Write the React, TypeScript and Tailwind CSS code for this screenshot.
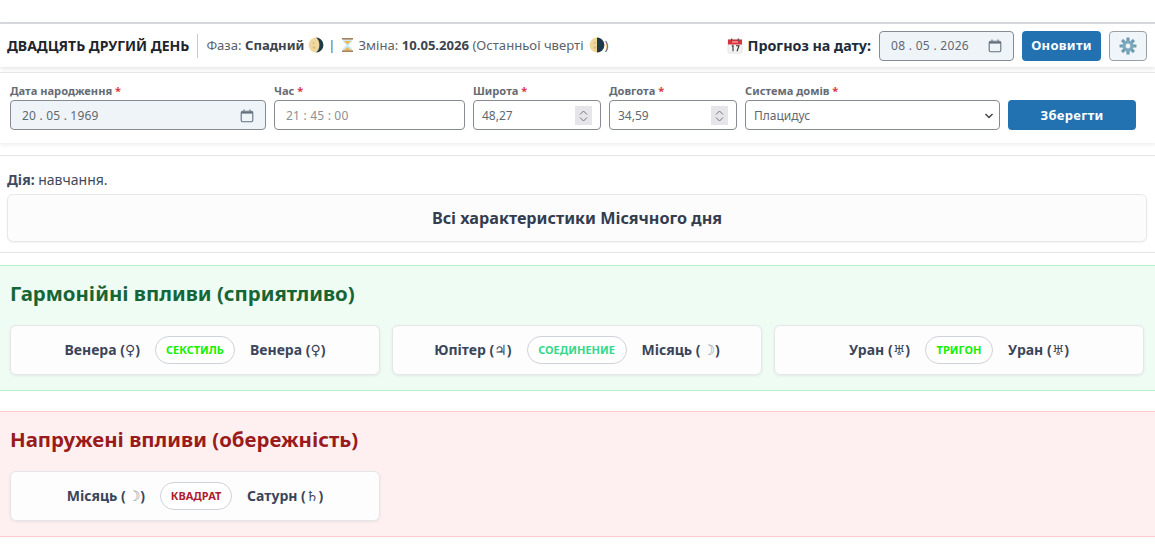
const FONT = "font-['Noto_Sans','Open_Sans','DejaVu_Sans',sans-serif]";

function CalIcon() {
  return (
    <svg width="14" height="14" viewBox="0 0 14 14" fill="none" stroke="#66707c" strokeWidth="1.100" className="shrink-0">
      <rect x="1.200" y="2.200" width="11.600" height="10.600" rx="1.500" />
      <path d="M1.200 3.700h11.600" strokeWidth="1.800" />
      <path d="M4 .6v2M10 .6v2" />
    </svg>
  );
}

function Spinner() {
  return (
    <span className="flex h-[19px] w-[17px] shrink-0 flex-col items-center justify-center gap-[2px] bg-[#e5e5ea]">
      <svg width="9" height="5" viewBox="0 0 9 5" fill="none" stroke="#777" strokeWidth="1"><path d="M1 4.500 4.500 1 8 4.500" /></svg>
      <svg width="9" height="5" viewBox="0 0 9 5" fill="none" stroke="#777" strokeWidth="1"><path d="M1 .5 4.500 4 8 .5" /></svg>
    </span>
  );
}

function Moon({ dark }: { dark: number }) {
  const cover = dark === 1 ? "M8 .6a7.400 7.400 0 0 1 0 14.800c2.300-1.800 3.400-4.400 3.400-7.400S10.300 2.400 8 .6z" : "M8 .6a7.400 7.400 0 0 1 0 14.800z";
  return (
    <svg width="16" height="16" viewBox="0 0 16 16" className="inline-block shrink-0 align-[-3px]">
      <circle cx="8" cy="8" r="7.400" fill="#f0d79c" />
      <circle cx="5.500" cy="6" r="1.100" fill="#dcbd7c" />
      <circle cx="6" cy="10.500" r="1.300" fill="#dcbd7c" />
      <path d={cover} fill="#1c3a4a" />
    </svg>
  );
}

function Hourglass() {
  return (
    <svg width="15" height="16" viewBox="0 0 15 16" className="inline-block shrink-0 align-[-3px]">
      <path d="M3 2h9v2.500L8.500 8l3.500 3.500V14H3v-2.500L6.500 8 3 4.500z" fill="#cfeaf5" />
      <path d="M4 4h7L7.500 7.500zM3.500 13.500 7.500 10l4 3.500z" fill="#f2b84b" />
      <rect x="2" y="1" width="11" height="1.600" fill="#a9825a" />
      <rect x="2" y="13.400" width="11" height="1.600" fill="#a9825a" />
    </svg>
  );
}

function CalendarEmoji() {
  return (
    <svg width="16" height="16" viewBox="0 0 16 16" className="shrink-0">
      <rect x="1" y="1.500" width="14" height="13.500" rx="1" fill="#f4f4f4" stroke="#ccc" strokeWidth=".5" />
      <rect x="1" y="1.500" width="14" height="5" fill="#d8323c" />
      <rect x="4" y=".5" width="1.300" height="2.500" fill="#555" />
      <rect x="10.700" y=".5" width="1.300" height="2.500" fill="#555" />
      <rect x="5" y="3.500" width="6" height="1" fill="#f7c6c6" />
      <path d="M4.800 8.200 6 7.600v5.600M9 7.800h3l-2 5.400" fill="none" stroke="#333" strokeWidth="1.100" />
    </svg>
  );
}

function Gear() {
  return (
    <svg width="18" height="18" viewBox="0 0 18 18">
      <g fill="#6c9db3">
        <rect x="7.400" y="0.500" width="3.200" height="17" rx=".6" />
        <rect x="7.400" y="0.500" width="3.200" height="17" rx=".6" transform="rotate(45 9 9)" />
        <rect x="7.400" y="0.500" width="3.200" height="17" rx=".6" transform="rotate(90 9 9)" />
        <rect x="7.400" y="0.500" width="3.200" height="17" rx=".6" transform="rotate(135 9 9)" />
      </g>
      <circle cx="9" cy="9" r="5.600" fill="#7ea9bc" />
      <circle cx="9" cy="9" r="2.400" fill="#eef3f7" />
    </svg>
  );
}

function Field({ label, className, children }: { label: string; className: string; children: React.ReactNode }) {
  return (
    <div className={`flex flex-col ${className}`}>
      <label className="mb-[3px] h-[12px] text-[11.100px] leading-[12px] font-bold text-[#666b73]">
        {label} <span className="text-[#dc3545]">*</span>
      </label>
      {children}
    </div>
  );
}

const inputBase = "flex h-[30px] items-center rounded-[4px] border border-[#868b93] pt-px text-[12px] text-[#5f6872]";

function Aspect({ left, right, type, color, width }: { left: React.ReactNode; right: React.ReactNode; type: string; color: string; width: string }) {
  return (
    <div className="flex h-[50px] w-[370px] items-center justify-center gap-[15px] rounded-[6px] border border-[#e6e6ea] bg-[#fdfdfe] shadow-[0_1px_3px_rgba(0,0,0,0.07)]">
      <span className="text-[14px] font-bold text-[#3b4559]">{left}</span>
      <span className={`flex h-[28px] items-center justify-center rounded-full border border-[#cfd2da] bg-white text-[11px] font-bold ${width} ${color}`}>{type}</span>
      <span className="text-[14px] font-bold text-[#3b4559]">{right}</span>
    </div>
  );
}

function P({ name, glyph, light }: { name: string; glyph: string; light?: boolean }) {
  return (
    <>
      {name} (<span className={`font-['DejaVu_Sans'] font-normal ${light ? "ml-[2px] text-[#8a8f99]" : ""}`}>{glyph}</span>)
    </>
  );
}

export default function App() {
  return (
    <div className={`${FONT} h-[549px] w-full overflow-hidden bg-white pt-[22px]`}>
      <header className="flex h-[45px] items-center border-t-2 border-[#d5d7dc] pr-[8px] pl-[7px] shadow-[0_2px_4px_rgba(0,0,0,0.1)]">
        <h1 className="text-[14px] font-bold text-[#212529]">ДВАДЦЯТЬ ДРУГИЙ ДЕНЬ</h1>
        <span className="mx-[8px] h-[24px] w-px bg-[#c8cbd0]" />
        <div className="flex items-center gap-[4px] text-[13.100px] whitespace-nowrap text-[#5c6269]">
          <span>Фаза: <b className="font-bold text-[#3d444d]">Спадний</b></span>
          <Moon dark={1} />
          <span>|</span>
          <Hourglass />
          <span>Зміна: <b className="font-bold text-[#3d444d]">10.05.2026</b> (Останньої чверті</span>
          <span className="ml-[1px] flex items-center"><Moon dark={2} />)</span>
        </div>
        <div className="ml-auto flex items-center">
          <CalendarEmoji />
          <span className="ml-[5px] text-[14.300px] font-bold text-[#212b3a]">Прогноз на дату:</span>
          <div className={`${inputBase} ml-[8px] w-[135px] justify-between bg-[#eff4f9] pr-[11px] pl-[11px] tracking-[0.3px]`}>
            <span>08 . 05 . 2026</span>
            <CalIcon />
          </div>
          <button className="ml-[8px] h-[30px] w-[79px] rounded-[4px] bg-[#2271b1] pt-px text-[13px] font-bold tracking-[0.3px] text-white">Оновити</button>
          <button className="ml-[8px] flex h-[30px] w-[38px] items-center justify-center rounded-[4px] border border-[#9aa0a8] bg-[#f0f5fa]"><Gear /></button>
        </div>
      </header>

      <section className="mt-[5px] flex h-[71px] items-start gap-[8px] border-t border-[#e4e5e8] px-[10px] pt-[12px] shadow-[0_2px_4px_rgba(0,0,0,0.07)]">
        <Field label="Дата народження" className="w-[256px]">
          <div className={`${inputBase} justify-between bg-[#eff4f9] pr-[11px] pl-[11px] tracking-[0.2px]`}>
            <span>20 . 05 . 1969</span>
            <CalIcon />
          </div>
        </Field>
        <Field label="Час" className="w-[191px]">
          <div className={`${inputBase} pl-[11px] tracking-[0.2px] text-[#8b9097]`}>21 : 45 : 00</div>
        </Field>
        <Field label="Широта" className="w-[128px]">
          <div className={`${inputBase} justify-between pr-[8px] pl-[8px]`}>
            <span>48,27</span>
            <Spinner />
          </div>
        </Field>
        <Field label="Довгота" className="w-[128px]">
          <div className={`${inputBase} justify-between pr-[8px] pl-[8px]`}>
            <span>34,59</span>
            <Spinner />
          </div>
        </Field>
        <Field label="Система домів" className="w-[255px]">
          <div className={`${inputBase} justify-between pr-[5px] pl-[8px]`}>
            <span>Плацидус</span>
            <svg width="10" height="6" viewBox="0 0 10 6" fill="none" stroke="#444" strokeWidth="1.500"><path d="M1.500 1 5 4.500 8.500 1" /></svg>
          </div>
        </Field>
        <button className="mt-[15px] h-[30px] w-[128px] rounded-[4px] bg-[#2271b1] pt-px text-[13px] font-bold tracking-[0.3px] text-white">Зберегти</button>
      </section>

      <section className="mt-[12px] h-[98px] border-y border-[#e4e5e8] pt-[14px] pr-[8px] pl-[7px]">
        <p className="h-[24px] text-[14px] leading-[19px] text-[#3f4a5c]"><b className="font-bold">Дія:</b> навчання.</p>
        <div className="flex h-[48px] items-center justify-center rounded-[6px] border border-[#e8e8ea] bg-[#fcfcfc] text-[16.200px] font-bold text-[#333d4f] shadow-[0_1px_2px_rgba(0,0,0,0.05)]">
          Всі характеристики Місячного дня
        </div>
      </section>

      <section className="mt-[12px] h-[126px] border-y border-[#bbf0cf] bg-[#eefcf4] px-[10px] pt-[14px]">
        <h2 className="h-[30px] text-[20.400px] leading-[27px] font-bold text-[#166534]">Гармонійні впливи (сприятливо)</h2>
        <div className="mt-[15px] flex gap-[12px]">
          <Aspect left={<P name="Венера" glyph="♀" />} right={<P name="Венера" glyph="♀" />} type="СЕКСТИЛЬ" color="text-[#14f000]" width="w-[80px]" />
          <Aspect left={<P name="Юпітер" glyph="♃" />} right={<P name="Місяць" glyph="☽" light />} type="СОЕДИНЕНИЕ" color="text-[#34d98a]" width="w-[100px]" />
          <Aspect left={<P name="Уран" glyph="♅" />} right={<P name="Уран" glyph="♅" />} type="ТРИГОН" color="text-[#14f000]" width="w-[68px]" />
        </div>
      </section>

      <section className="mt-[20px] h-[126px] border-y border-[#fecaca] bg-[#fef0f0] px-[10px] pt-[14px]">
        <h2 className="h-[30px] text-[20.400px] leading-[27px] font-bold text-[#991b1b]">Напружені впливи (обережність)</h2>
        <div className="mt-[15px] flex gap-[12px]">
          <Aspect left={<P name="Місяць" glyph="☽" light />} right={<P name="Сатурн" glyph="♄" />} type="КВАДРАТ" color="text-[#b01c2e]" width="w-[72px]" />
        </div>
      </section>
    </div>
  );
}
